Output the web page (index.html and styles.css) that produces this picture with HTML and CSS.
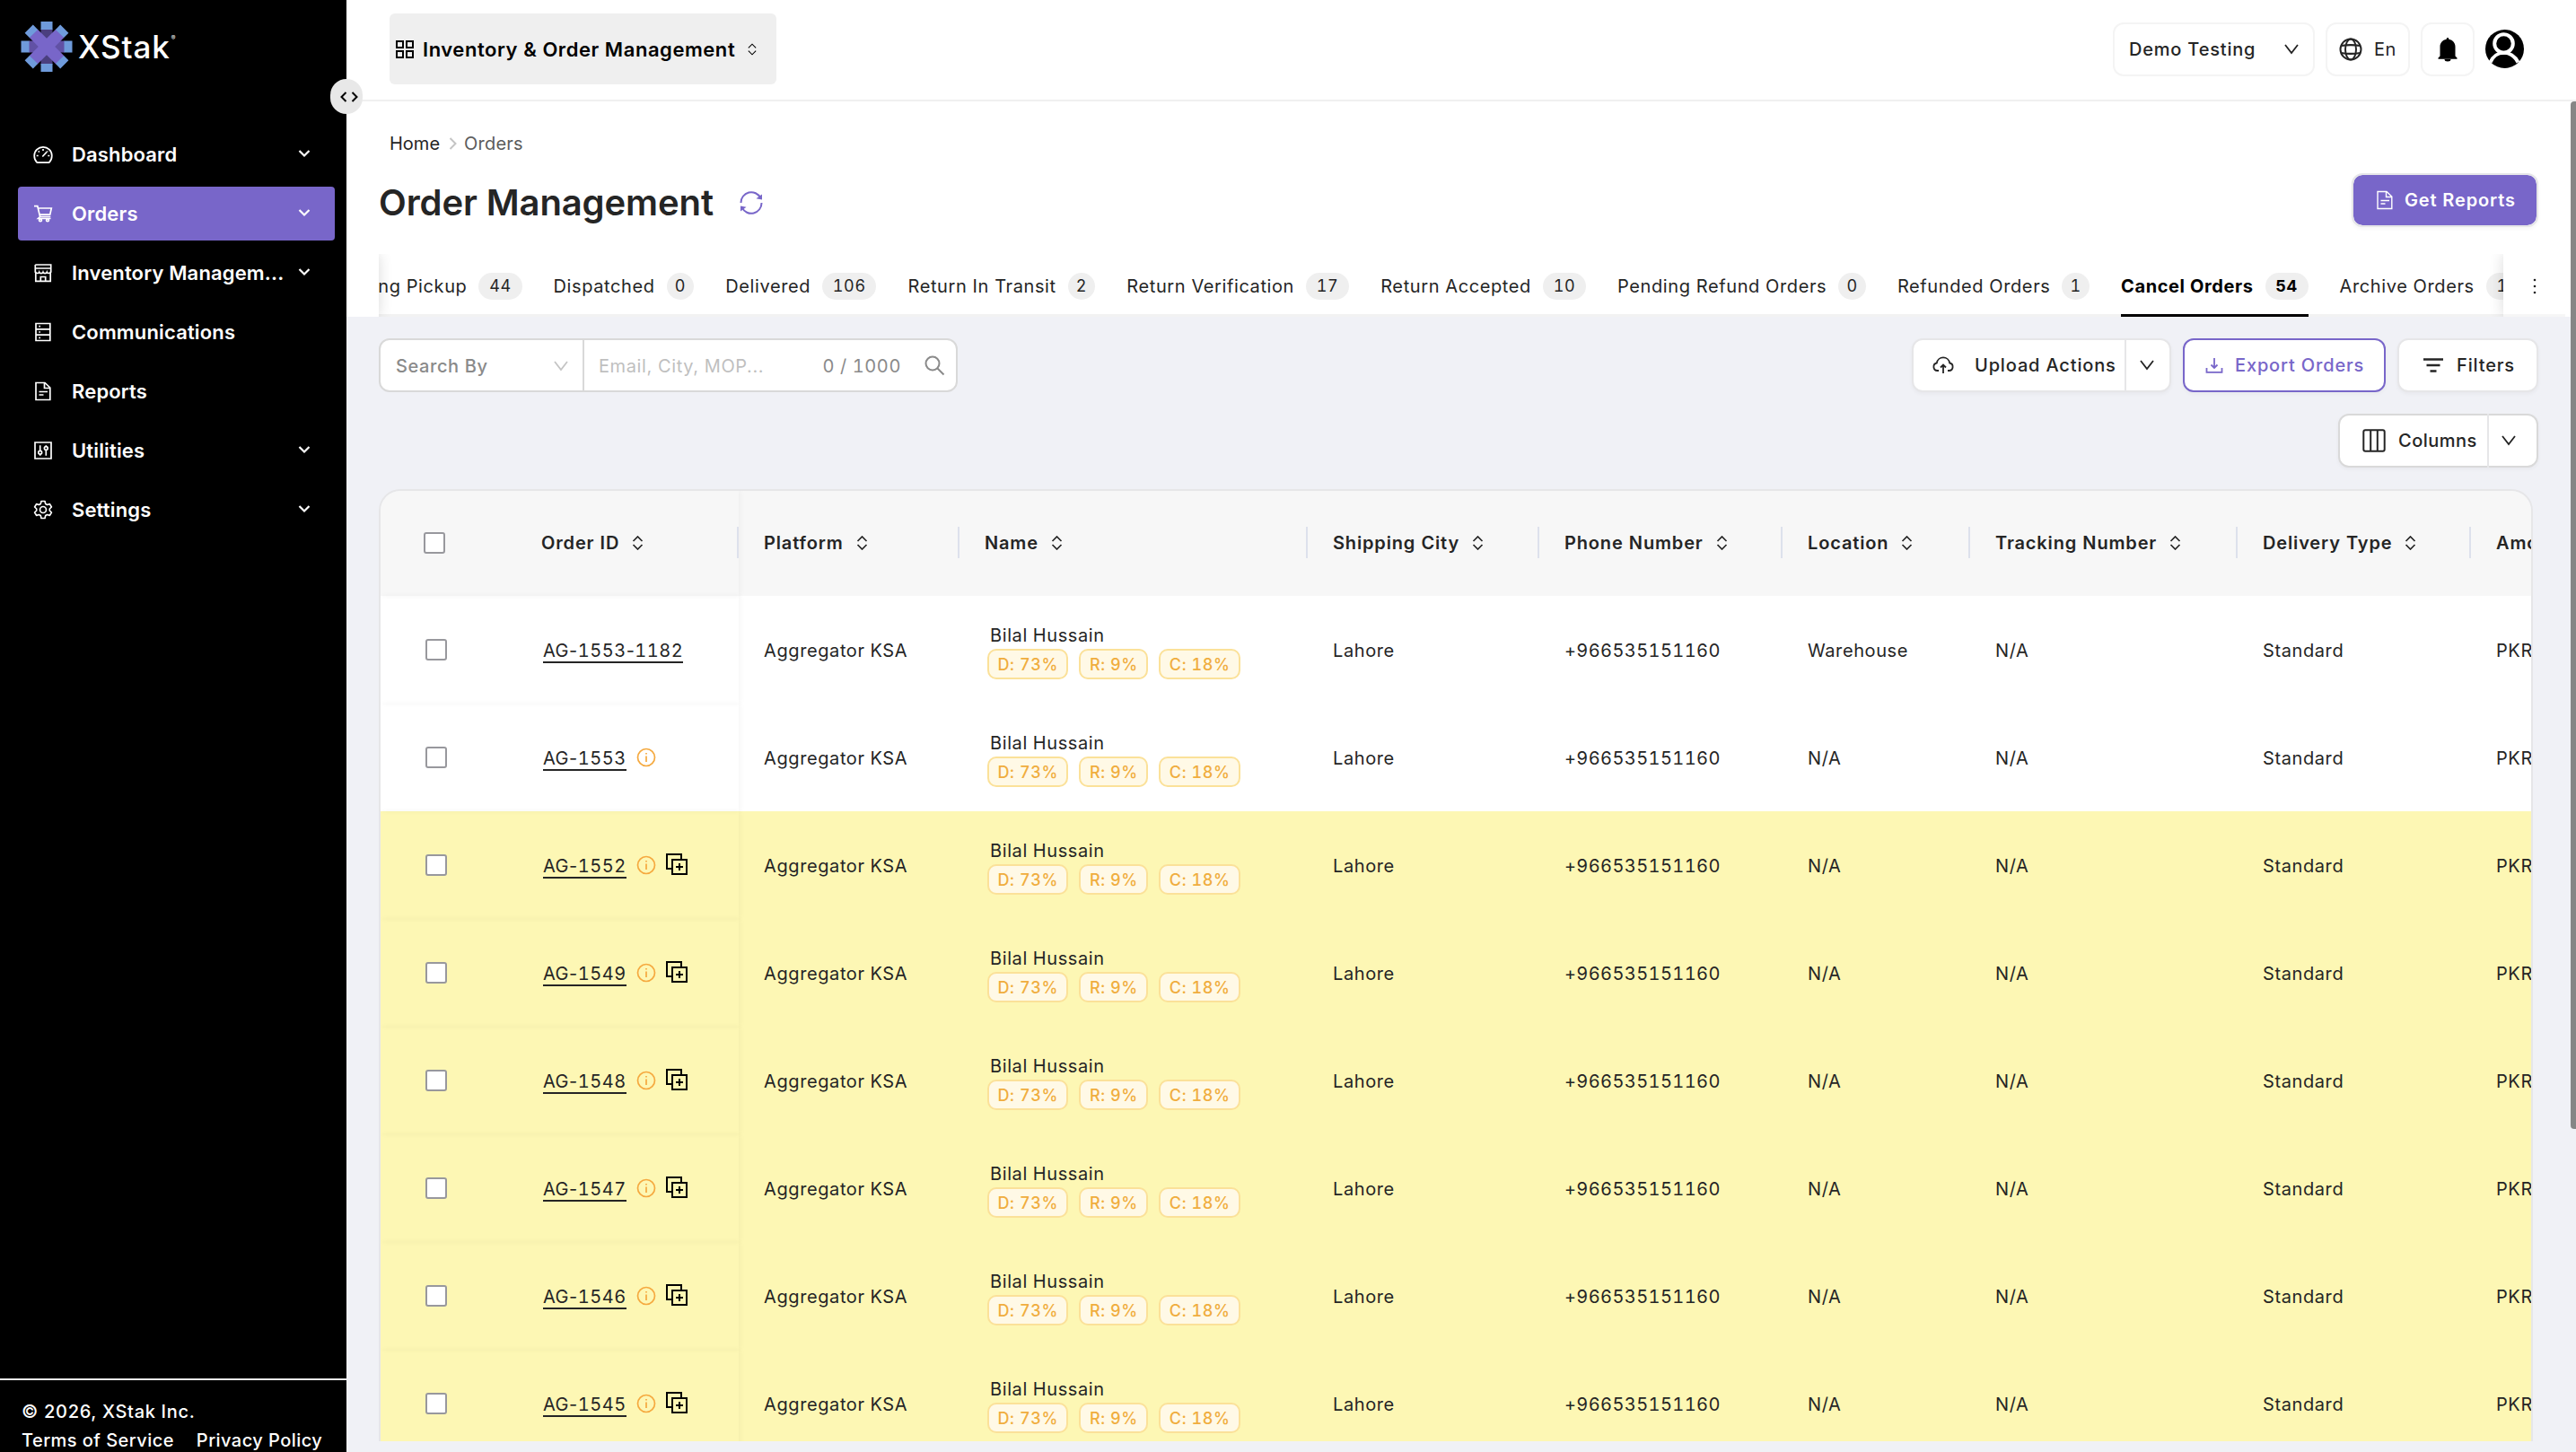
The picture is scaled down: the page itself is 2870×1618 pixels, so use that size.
FILE: index.html
```html
<!DOCTYPE html>
<html lang="en">
<head>
  <meta charset="UTF-8">
  <meta name="viewport" content="width=device-width, initial-scale=1.0">
  <title>Order Management</title>
  <link rel="stylesheet" href="styles.css">
</head>
<body>
  <!-- icons -->
  <svg class="sprite" xmlns="http://www.w3.org/2000/svg">
    <symbol id="i-chevron" viewBox="0 0 16 12"><path d="M1 1l7 9 7-9"/></symbol>
    <symbol id="i-menu-arrow" viewBox="0 0 14 10"><path d="M1.500 2L7 7.500 12.500 2"/></symbol>
    <symbol id="i-sort" viewBox="0 0 12 16"><path d="M1 6l5-5 5 5M1 10l5 5 5-5"/></symbol>
    <symbol id="i-dashboard" viewBox="0 0 22 22"><path d="M4.300 20.200C2.300 18.300 1.200 15.600 1.200 12.500a9.800 9.600 0 0 1 19.600 0c0 3.100-1.100 5.800-3.100 7.700z"/><path d="M11 5v2M5.700 7.300l1.200 1.200M3.700 12.500h2M16.300 12.500h2M10.300 13.500l5-5.300M16.300 7.300l-.6.600"/></symbol>
    <symbol id="i-cart" viewBox="0 0 22 22"><path d="M1 2.700h3.800l2.800 11.800h11.700M5.300 5h15l-1.600 7.200H7M7.600 14.500l-2.100 2h14"/><circle cx="8" cy="18.300" r="1.400"/><circle cx="16" cy="18.300" r="1.400"/></symbol>
    <symbol id="i-store" viewBox="0 0 22 22"><path d="M2.300 2h17.400v8.500M2.300 2v8.500M2.300 6h17.400M2.800 10.500v9.800h16.400v-9.800M8.300 20.300V15.500h5.400v4.800"/><path d="M2.300 9.800c.6 2.200 3.700 2.200 4.400.4.700 1.800 3.600 1.800 4.300 0 .7 1.800 3.600 1.800 4.300 0 .7 1.800 3.800 1.800 4.400-.4"/></symbol>
    <symbol id="i-list" viewBox="0 0 22 22"><path d="M3 1.500h15.800v19H3zM3 7.800h15.800M3 14.100h15.800M6.300 4.700h1.700M6.300 11h1.700M6.300 17.300h1.700"/></symbol>
    <symbol id="i-file" viewBox="0 0 22 22"><path d="M3 1.500h10l5.800 5.500v13.500H3zM12.500 1.500v6h6.300M6.500 11.500h9.500M6.500 15h5"/></symbol>
    <symbol id="i-utils" viewBox="0 0 22 22"><path d="M2 2h18v18H2zM7.700 5.300v6M7.700 15.300v1.500M14.300 5.300v1.300M14.300 10.500v6.300"/><circle cx="7.700" cy="13.300" r="1.900"/><circle cx="14.300" cy="8.500" r="1.900"/></symbol>
    <symbol id="i-gear" viewBox="0 0 22 22"><path stroke-linejoin="round" d="M9 1.500h4l.7 2.900 1.900 1.100 2.800-.9 2 3.400-2.100 2v2l2.100 2-2 3.400-2.800-.9-1.900 1.100-.7 2.900H9l-.7-2.900-1.900-1.100-2.800.9-2-3.400 2.100-2v-2l-2.100-2 2-3.400 2.800.9 1.900-1.100z"/><circle cx="11" cy="11" r="3.500"/></symbol>
    <symbol id="i-sync" viewBox="0 0 26 26"><path d="M1.500 13A11.500 11.500 0 0 1 23.300 7.600M24.500 13A11.500 11.500 0 0 1 2.700 18.400"/><path class="fill" d="M25 3.500v6l-6.500-1.300zM1 22.500v-6l6.500 1.300z"/></symbol>
    <symbol id="i-info" viewBox="0 0 22 22"><circle cx="11" cy="11" r="9.500"/><path d="M11 9.500v6.500M11 6v1.600"/></symbol>
    <symbol id="i-copy" viewBox="0 0 24 24"><path d="M7 17H1V1h16v6M7 7h16v16H7zM15 11v8M11 15h8"/></symbol>
  </svg>

  <div class="app">
    <aside class="sidebar">
      <div class="logo">
        <svg width="58" height="58" viewBox="-29 -29 58 58">
          <path fill="#4b3f7f" d="M-6.500-20h13v40h-13z"/>
          <path fill="#6151a5" d="M-20-6.500h40v13h-40z"/>
          <path fill="#6f9bdb" d="M-6.500-28h13v9h-13zM-6.500 19h13v9h-13zM-28.500-6.500h9v13h-9zM19.500-6.500h9v13h-9z"/>
          <g transform="rotate(45)"><path fill="#7866c9" d="M-21-6.500h42v13h-42z"/><path fill="#6f9bdb" d="M-28-6.500h7.500v13h-7.500zM20.500-6.500h7.500v13h-7.500z"/></g>
          <g transform="rotate(-45)"><path fill="#7866c9" d="M-21-6.500h42v13h-42z"/><path fill="#6f9bdb" d="M-28-6.500h7.500v13h-7.500zM20.500-6.500h7.500v13h-7.500z"/></g>
        </svg>
        <span class="logo-text">XStak</span><span class="reg">®</span>
      </div>

      <nav class="menu">
        <a class="menu-item"><svg class="icon"><use href="#i-dashboard"/></svg><span>Dashboard</span><svg class="arrow"><use href="#i-menu-arrow"/></svg></a>
        <a class="menu-item active"><svg class="icon"><use href="#i-cart"/></svg><span>Orders</span><svg class="arrow"><use href="#i-menu-arrow"/></svg></a>
        <a class="menu-item"><svg class="icon"><use href="#i-store"/></svg><span>Inventory Managem...</span><svg class="arrow"><use href="#i-menu-arrow"/></svg></a>
        <a class="menu-item"><svg class="icon"><use href="#i-list"/></svg><span>Communications</span></a>
        <a class="menu-item"><svg class="icon"><use href="#i-file"/></svg><span>Reports</span></a>
        <a class="menu-item"><svg class="icon"><use href="#i-utils"/></svg><span>Utilities</span><svg class="arrow"><use href="#i-menu-arrow"/></svg></a>
        <a class="menu-item"><svg class="icon"><use href="#i-gear"/></svg><span>Settings</span><svg class="arrow"><use href="#i-menu-arrow"/></svg></a>
      </nav>

      <div class="sidebar-footer">
        <div>© 2026, XStak Inc.</div>
        <div class="links"><a>Terms of Service</a><a>Privacy Policy</a></div>
      </div>

      <button class="collapse">
        <svg width="20" height="12" viewBox="0 0 20 12"><path d="M6.500 1L1.500 6l5 5M13.500 1l5 5-5 5"/></svg>
      </button>
    </aside>

    <main class="main">
      <header class="topbar">
        <button class="app-switch">
          <svg width="20" height="20" viewBox="0 0 20 20"><path d="M1 1h7v7H1zM12 1h7v7h-7zM1 12h7v7H1zM12 12h7v7h-7z"/></svg>
          <span>Inventory &amp; Order Management</span>
          <svg class="sort-sm"><use href="#i-sort"/></svg>
        </button>
        <div class="top-actions">
          <button class="box tenant">Demo Testing <svg class="chev"><use href="#i-chevron"/></svg></button>
          <button class="box lang">
            <svg width="26" height="26" viewBox="0 0 26 26"><circle cx="13" cy="13" r="11.500"/><ellipse cx="13" cy="13" rx="6" ry="11.500"/><path d="M2.500 9c6-1 15-1 21 0M2.500 17c6 1 15 1 21 0"/></svg>
            En
          </button>
          <button class="box bell">
            <svg width="22" height="28" viewBox="0 0 22 28"><path d="M11 1c.9 0 1.300.6 1.300 1.700C17 3.500 19.500 7 19.500 11v10.500l2 2v1.300H.5v-1.300l2-2V11c0-4 2.500-7.500 7.200-8.300C9.700 1.600 10.100 1 11 1zM7.500 25h7a3.500 2.500 0 0 1-7 0z"/></svg>
          </button>
          <svg class="avatar" width="43" height="43" viewBox="0 0 43 43"><circle cx="21.500" cy="21.500" r="21.500"/><circle class="line" cx="20.500" cy="15.500" r="10.300"/><path class="line" d="M5.500 36.500c3-7 9-10.700 15-10.700s12.500 3.700 16 10.700"/></svg>
        </div>
      </header>

      <section class="page-head">
        <div class="breadcrumb"><a>Home</a><svg width="9" height="14" viewBox="0 0 9 14"><path d="M1.500 1l6 6-6 6"/></svg><span>Orders</span></div>
        <div class="title-row">
          <h1>Order Management</h1>
          <svg class="sync"><use href="#i-sync"/></svg>
          <button class="btn primary"><svg class="icon"><use href="#i-file"/></svg>Get Reports</button>
        </div>
        <div class="tabs">
          <div class="tab-list">
            <div class="tab">Pending Pickup<span class="pill">44</span></div>
            <div class="tab">Dispatched<span class="pill single">0</span></div>
            <div class="tab">Delivered<span class="pill">106</span></div>
            <div class="tab">Return In Transit<span class="pill single">2</span></div>
            <div class="tab">Return Verification<span class="pill">17</span></div>
            <div class="tab">Return Accepted<span class="pill">10</span></div>
            <div class="tab">Pending Refund Orders<span class="pill single">0</span></div>
            <div class="tab">Refunded Orders<span class="pill single">1</span></div>
            <div class="tab active">Cancel Orders<span class="pill">54</span></div>
            <div class="tab">Archive Orders<span class="pill">10</span></div>
          </div>
          <div class="tab-more"><svg width="4" height="18" viewBox="0 0 4 18"><circle cx="2" cy="2" r="1.300"/><circle cx="2" cy="9" r="1.300"/><circle cx="2" cy="16" r="1.300"/></svg></div>
        </div>
      </section>

      <section class="content">
        <div class="toolbar">
          <div class="search">
            <div class="search-by">Search By <svg class="chev"><use href="#i-chevron"/></svg></div>
            <div class="search-input"><span class="placeholder">Email, City, MOP...</span><span class="count">0 / 1000</span>
              <svg width="23" height="23" viewBox="0 0 23 23"><circle cx="9" cy="9" r="7.500"/><path d="M14.500 14.500l7 7"/></svg>
            </div>
          </div>
          <div class="actions">
            <div class="btn split upload">
              <svg class="cloud" width="24" height="20" viewBox="0 0 24 20"><path d="M7 16H5.500a4.300 4.300 0 0 1-.7-8.500 7.300 7.300 0 0 1 14.400 0 4.300 4.300 0 0 1-.7 8.500H17M12 19v-9M9 12.500l3-3 3 3"/></svg>
              <span>Upload Actions</span>
              <i><svg class="chev"><use href="#i-chevron"/></svg></i>
            </div>
            <button class="btn export"><svg width="20" height="18" viewBox="0 0 20 18"><path d="M10 1v10.500M6.500 8.500l3.500 3.500 3.500-3.500M1.500 12v4.800h17V12"/></svg>Export Orders</button>
            <button class="btn filters"><svg width="24" height="16" viewBox="0 0 24 16"><path d="M1 1.500h22M4.500 8h15M8.500 14.500h7"/></svg>Filters</button>
          </div>
        </div>
        <div class="toolbar right">
          <div class="btn split columns">
            <svg width="26" height="26" viewBox="0 0 26 26"><rect x="1.300" y="1.300" width="23.400" height="23.400" rx="2"/><path d="M9.200 1v24M16.800 1v24"/></svg>
            <span>Columns</span>
            <i><svg class="chev"><use href="#i-chevron"/></svg></i>
          </div>
        </div>

        <div class="table">
          <div class="row head">
            <div class="cell fixed"><span class="checkbox"></span><span class="order-id">Order ID</span><svg class="sort"><use href="#i-sort"/></svg></div>
            <div class="cell">Platform<svg class="sort"><use href="#i-sort"/></svg></div>
            <div class="cell">Name<svg class="sort"><use href="#i-sort"/></svg></div>
            <div class="cell">Shipping City<svg class="sort"><use href="#i-sort"/></svg></div>
            <div class="cell">Phone Number<svg class="sort"><use href="#i-sort"/></svg></div>
            <div class="cell">Location<svg class="sort"><use href="#i-sort"/></svg></div>
            <div class="cell">Tracking Number<svg class="sort"><use href="#i-sort"/></svg></div>
            <div class="cell">Delivery Type<svg class="sort"><use href="#i-sort"/></svg></div>
            <div class="cell">Amount</div>
          </div>
          <div id="rows"></div>
        </div>
      </section>
      <div class="scrollbar"></div>
    </main>
  </div>

  <script>
    const orders = [
      { id: 'AG-1553-1182', location: 'Warehouse' },
      { id: 'AG-1553', info: true },
      { id: 'AG-1552', info: true, duplicate: true },
      { id: 'AG-1549', info: true, duplicate: true },
      { id: 'AG-1548', info: true, duplicate: true },
      { id: 'AG-1547', info: true, duplicate: true },
      { id: 'AG-1546', info: true, duplicate: true },
      { id: 'AG-1545', info: true, duplicate: true },
    ];

    // tabular digits, but a normal width hyphen
    const formatId = (id) => id.replace(/-/g, '<span class="dash">-</span>');

    document.getElementById('rows').innerHTML = orders.map((order) => `
      <div class="row ${order.duplicate ? 'duplicate' : ''}">
        <div class="cell fixed">
          <span class="checkbox"></span>
          <a class="order-id">${formatId(order.id)}</a>
          ${order.info ? '<svg class="info"><use href="#i-info"/></svg>' : ''}
          ${order.duplicate ? '<svg class="copy"><use href="#i-copy"/></svg>' : ''}
        </div>
        <div class="cell">Aggregator KSA</div>
        <div class="cell name">
          <div class="customer">Bilal Hussain</div>
          <div class="tags"><span>D: 73%</span><span>R: 9%</span><span>C: 18%</span></div>
        </div>
        <div class="cell">Lahore</div>
        <div class="cell phone">+966535151160</div>
        <div class="cell">${order.location || 'N/A'}</div>
        <div class="cell">N/A</div>
        <div class="cell">Standard</div>
        <div class="cell">PKR 100</div>
      </div>`).join('');
  </script>
</body>
</html>
```
FILE: styles.css
```css
* {
  margin: 0;
  padding: 0;
  box-sizing: border-box;
}

body {
  font-family: Inter, sans-serif;
  font-size: 20px;
  letter-spacing: 0.6px;
  color: #252525;
  background: #fff;
  overflow: hidden;
}

button {
  font: inherit;
  letter-spacing: inherit;
  color: inherit;
  border: none;
  background: #fff;
}

svg {
  flex: none;
  fill: none;
  stroke: currentColor;
  stroke-width: 2;
}

.sprite {
  display: none;
}

.fill {
  fill: currentColor;
  stroke: none;
}

.app {
  display: flex;
  height: 1618px;
}

/* Sidebar */
.sidebar {
  position: relative;
  flex: none;
  display: flex;
  flex-direction: column;
  width: 386px;
  background: #000;
  color: #fff;
}

.logo {
  display: flex;
  align-items: center;
  height: 139px;
  padding: 0 0 35px 23px;
}

.logo svg {
  stroke: none;
}

.logo-text {
  margin-left: 6px;
  font-size: 35px;
  font-weight: 500;
  letter-spacing: 0.9px;
}

.reg {
  margin: -20px 0 0 1px;
  font-size: 7px;
}

.menu {
  flex: 1;
  padding: 0 13px 0 20px;
}

.menu-item {
  display: flex;
  align-items: center;
  height: 60px;
  margin: 3px 0 6px;
  padding: 0 27px 0 17px;
  border-radius: 4px;
  font-size: 22px;
  font-weight: 600;
  letter-spacing: 0.15px;
}

.menu-item span {
  flex: 1;
  margin-left: 21px;
}

.menu-item.active {
  background: #7866c9;
}

.menu-item .icon {
  width: 22px;
  height: 22px;
  stroke-width: 1.7;
}

.menu-item .arrow {
  width: 14px;
  height: 10px;
  margin-top: -3px;
  stroke-width: 2.2;
}

.sidebar-footer {
  height: 82px;
  padding: 19px 0 0 24px;
  border-top: 2px solid #e8e8e8;
  font-weight: 500;
  line-height: 32px;
  letter-spacing: 0.7px;
  white-space: nowrap;
}

.links {
  display: flex;
  gap: 25px;
  letter-spacing: 0.45px;
}

.collapse {
  position: absolute;
  top: 88px;
  right: -18px;
  display: flex;
  align-items: center;
  justify-content: center;
  width: 36px;
  height: 39px;
  padding-left: 5px;
  border-radius: 18px;
  background: #e8e8e8;
  color: #000;
  z-index: 1;
}

/* Top bar */
.main {
  position: relative;
  flex: 1;
  min-width: 0;
  display: flex;
  flex-direction: column;
}

.topbar {
  flex: none;
  display: flex;
  justify-content: space-between;
  height: 113px;
  padding: 0 58px 0 48px;
  border-bottom: 2px solid #f0f0f0;
}

.app-switch {
  display: flex;
  align-items: center;
  width: 431px;
  height: 79px;
  margin-top: 15px;
  padding: 0 0 0 7px;
  border-radius: 6px;
  background: #efefef;
  color: #000;
  font-size: 22px;
  font-weight: 600;
  letter-spacing: 0.55px;
}

.app-switch span {
  margin: 0 14px 0 10px;
}

.sort-sm {
  width: 10px;
  height: 14px;
  stroke-width: 1.3;
}

.top-actions {
  display: flex;
  align-items: center;
  gap: 12px;
  margin-top: -2px;
}

.box {
  display: flex;
  align-items: center;
  justify-content: center;
  height: 60px;
  border: 2px solid #f4f4f4;
  border-radius: 12px;
}

.tenant {
  width: 225px;
  justify-content: space-between;
  padding: 0 16px;
  font-weight: 500;
  letter-spacing: 0.8px;
}

.chev {
  width: 16px;
  height: 12px;
  stroke-width: 1.8;
  color: #222;
}

.lang {
  width: 94px;
  gap: 13px;
}

.bell {
  width: 60px;
}

.bell svg {
  fill: #000;
  stroke: none;
}

.avatar {
  fill: #000;
  stroke: none;
}

.avatar .line {
  fill: none;
  stroke: #fff;
  stroke-width: 4;
}

/* Page header */
.page-head {
  flex: none;
  height: 240px;
  padding: 30px 6px 0 36px;
}

.breadcrumb {
  display: flex;
  align-items: center;
  height: 34px;
  padding-left: 12px;
  letter-spacing: 0;
}

.breadcrumb svg {
  margin: 0 8px 0 10px;
  color: #c4c4c4;
}

.breadcrumb span {
  color: #5c5c5c;
  letter-spacing: 0.2px;
}

.title-row {
  display: flex;
  align-items: center;
  height: 60px;
  margin-top: 16px;
  padding-right: 36px;
}

h1 {
  font-size: 40px;
  font-weight: 600;
  letter-spacing: -0.1px;
  padding-top: 5px;
}

.sync {
  width: 26px;
  height: 26px;
  margin: 6px 0 0 29px;
  color: #7866c9;
}

.btn {
  display: flex;
  align-items: center;
  height: 60px;
  border: 2px solid #e6e6e8;
  border-radius: 12px;
  background: #fff;
  box-shadow: 0 2px 4px rgba(0, 0, 0, 0.04);
  font-weight: 500;
  letter-spacing: 0.85px;
  white-space: nowrap;
}

.primary {
  width: 208px;
  margin: -1px 0 0 auto;
  padding-left: 24px;
  background: #7866c9;
  background-clip: padding-box;
  color: #fff;
  font-weight: 600;
}

.primary .icon {
  width: 22px;
  height: 22px;
  margin-right: 11px;
  stroke-width: 1.4;
}

.tabs {
  display: flex;
  height: 70px;
  margin-top: 30px;
}

.tab-list {
  position: relative;
  flex: none;
  display: flex;
  gap: 35px;
  width: 2367px;
  overflow: clip;
  overflow-clip-margin: border-box;
  border-bottom: 3px solid #f2f2f2;
}

/* scroll shadows on both ends of the tab list */
.tab-list::before,
.tab-list::after {
  content: "";
  position: absolute;
  top: 0;
  bottom: -3px;
  left: -20px;
  width: 20px;
  box-shadow: 0 0 16px rgba(0, 0, 0, 0.15);
}

.tab-list::after {
  left: auto;
  right: -20px;
}

.tab {
  flex: none;
  display: flex;
  align-items: center;
  height: 67px;
  padding-top: 4px;
  white-space: nowrap;
}

.tab:first-child {
  margin-left: -57px;
}

.pill {
  height: 30px;
  margin: 1px 0 0 13px;
  padding: 0 11.8px;
  border-radius: 15px;
  background: #efefef;
  font-size: 18px;
  line-height: 30px;
  text-align: center;
  font-feature-settings: "tnum";
}

.pill.single {
  padding: 0 9.2px;
}

.tab.active {
  color: #000;
  font-weight: 700;
  box-shadow: 0 3px #000;
}

.tab-more {
  display: flex;
  justify-content: center;
  width: 69px;
  padding-top: 27px;
  border-bottom: 3px solid #f6f6f6;
}

.tab-more svg {
  fill: #222;
  stroke: none;
}

/* Content */
.content {
  flex: 1;
  min-height: 0;
  display: flex;
  flex-direction: column;
  gap: 24px;
  padding: 24px 42px 12px 36px;
  background: #f0f1f6;
}

.toolbar {
  flex: none;
  display: flex;
  justify-content: space-between;
  height: 60px;
}

.toolbar.right {
  justify-content: flex-end;
}

.search {
  display: flex;
  width: 645px;
  border: 2px solid #d9d9d9;
  border-radius: 12px;
  background: #fff;
  color: #8a8a8a;
}

.search-by {
  display: flex;
  align-items: center;
  justify-content: space-between;
  width: 227px;
  padding: 1px 16px 0 17px;
  border-right: 2px solid #d9d9d9;
  font-weight: 500;
}

.search-by .chev {
  color: #c4c4c4;
}

.search-input {
  flex: 1;
  display: flex;
  align-items: center;
  padding: 1px 12px 0 16px;
}

.placeholder {
  flex: 1;
  color: #bfbfbf;
}

.count {
  margin-right: 26px;
  font-feature-settings: "tnum";
}

.actions {
  display: flex;
  gap: 13px;
}

.split i {
  display: flex;
  align-items: center;
  justify-content: center;
  height: 60px;
  border-left: 2px solid #e6e6e8;
}

.upload {
  width: 289px;
}

.upload .cloud {
  margin: 0 23px 0 21px;
  stroke-width: 1.8;
}

.upload i {
  width: 50px;
  margin-left: auto;
  padding-right: 3px;
}

.export {
  width: 226px;
  padding-left: 23px;
  border-color: #7866c9;
  color: #7866c9;
}

.export svg {
  margin-right: 13px;
  stroke-width: 1.8;
}

.filters {
  width: 157px;
  padding-left: 26px;
}

.filters svg {
  margin-right: 14px;
  stroke-width: 2.4;
}

.columns {
  width: 223px;
  border-color: #d9d9d9;
  letter-spacing: 0.5px;
}

.columns > svg {
  margin: 0 14px 0 25px;
}

.columns i {
  width: 55px;
  margin-left: auto;
  padding-right: 10px;
}

/* Table */
.table {
  flex: 1;
  min-height: 0;
  width: 2400px;
  overflow: hidden;
  border: 2px solid #e6e6e8;
  border-bottom: none;
  border-radius: 24px 24px 0 0;
}

.row {
  display: grid;
  grid-template-columns: 399px 246px 388px 258px 271px 209px 298px 260px 200px;
  height: 120px;
  background: #fff;
}

.row.duplicate {
  background: #fdf7b4;
}

.cell {
  display: flex;
  align-items: center;
  padding: 1px 0 0 28px;
  white-space: nowrap;
  font-feature-settings: "tnum";
}

.fixed {
  padding: 0 0 0 50px;
  box-shadow: 2px 0 6px rgba(0, 0, 0, 0.04);
}

.checkbox {
  width: 24px;
  height: 24px;
  border: 2px solid #98989d;
  border-radius: 3px;
  background: #fff;
}

.fixed .order-id {
  margin-left: 107px;
}

.row a.order-id {
  border-bottom: 2px solid #252525;
  line-height: 24px;
  margin-top: 3px;
  letter-spacing: 0.5px;
}

.dash {
  font-feature-settings: normal;
}

.phone {
  letter-spacing: 0.4px;
}

.head {
  height: 117px;
  background: #f7f7f7;
  font-weight: 600;
}

.head .cell {
  position: relative;
  padding-top: 0;
  padding-bottom: 1px;
  letter-spacing: 0.85px;
}

.head .cell::after {
  content: "";
  position: absolute;
  top: 40px;
  right: 0;
  width: 2px;
  height: 35px;
  background: #dde1ec;
}

.head .fixed {
  padding-left: 48px;
}

.sort {
  width: 13px;
  height: 16px;
  margin-left: 14px;
  stroke-width: 1.7;
}

.info {
  width: 22px;
  height: 22px;
  margin-left: 11px;
  color: #f5a93f;
  stroke-width: 1.7;
}

.copy {
  width: 24px;
  height: 24px;
  margin: -2px 0 0 11px;
  color: #000;
}

.name {
  flex-direction: column;
  align-items: flex-start;
  justify-content: center;
  padding: 0 0 0 31px;
  line-height: 32px;
}

.customer {
  height: 32px;
  padding-left: 3px;
  line-height: 34px;
}

.tags {
  display: flex;
  gap: 12px;
}

.tags span {
  height: 34px;
  padding: 0 9.500px;
  border: 2px solid #fbe199;
  border-radius: 10px;
  background: #fff9e6;
  color: #f0ad3e;
  font-size: 18px;
  font-weight: 500;
  line-height: 32px;
}

.scrollbar {
  position: absolute;
  top: 113px;
  right: 0;
  width: 6px;
  height: 1145px;
  border-radius: 4px 0 0 4px;
  background: #868686;
}
```
